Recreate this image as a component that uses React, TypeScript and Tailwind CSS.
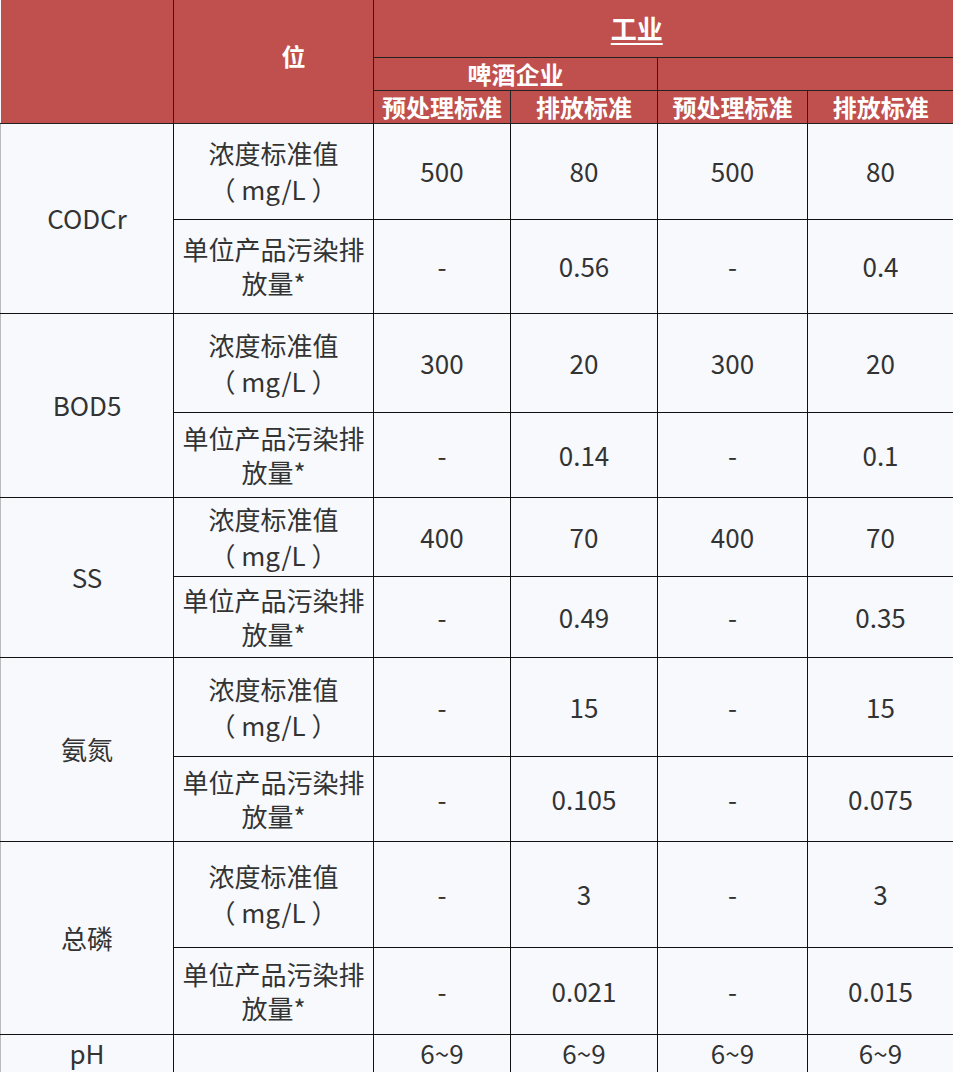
import React from "react";

const groups: { name: string; h: [string, string]; conc: string[]; unit: string[] }[] = [
  { name: "CODCr", h: ["h-[96px]", "h-[94px]"], conc: ["500", "80", "500", "80"], unit: ["-", "0.56", "-", "0.4"] },
  { name: "BOD5", h: ["h-[99px]", "h-[85px]"], conc: ["300", "20", "300", "20"], unit: ["-", "0.14", "-", "0.1"] },
  { name: "SS", h: ["h-[79px]", "h-[81px]"], conc: ["400", "70", "400", "70"], unit: ["-", "0.49", "-", "0.35"] },
  { name: "氨氮", h: ["h-[99px]", "h-[85px]"], conc: ["-", "15", "-", "15"], unit: ["-", "0.105", "-", "0.075"] },
  { name: "总磷", h: ["h-[106px]", "h-[87px]"], conc: ["-", "3", "-", "3"], unit: ["-", "0.021", "-", "0.015"] },
];

const cell = "border-[1.5px] border-[#111] text-center align-middle p-0";
const head = "border-[1.5px] border-[#222] text-center align-middle p-0 text-white font-bold";

export default function App() {
  return (
    <div
      className="w-[953px] h-[1072px] bg-[#f7f9fd] text-[#333] overflow-hidden"
      style={{ fontFamily: '"Noto Sans CJK SC", "Noto Sans", sans-serif' }}
    >
      <table className="w-[953px] table-fixed border-collapse text-[26px] leading-[36px]">
        <colgroup>
          <col className="w-[173px]" />
          <col className="w-[200px]" />
          <col className="w-[137px]" />
          <col className="w-[147px]" />
          <col className="w-[150px]" />
          <col className="w-[146px]" />
        </colgroup>
        <thead className="bg-[#c0504d]">
          <tr className="h-[57px]">
            <th rowSpan={3} className={head + " border-t-0 border-l-0"}></th>
            <th rowSpan={3} className={head + " border-t-0 text-[24px]"}>
              <span className="inline-block pl-[40px] pb-[10px]">位</span>
            </th>
            <th colSpan={4} className={head + " border-t-0 border-r-0 text-[26px]"}>
              <span className="inline-block pr-[54px]">
                <span className="underline underline-offset-4 decoration-2">工业</span>
              </span>
            </th>
          </tr>
          <tr className="h-[33px]">
            <th colSpan={2} className={head + " text-[24px] leading-[28px]"}>啤酒企业</th>
            <th colSpan={2} className={head + " border-r-0 text-[24px] leading-[28px]"}></th>
          </tr>
          <tr className="h-[33px]">
            <th className={head + " text-[24px] leading-[28px]"}>预处理标准</th>
            <th className={head + " text-[24px] leading-[28px]"}>排放标准</th>
            <th className={head + " text-[24px] leading-[28px]"}>预处理标准</th>
            <th className={head + " border-r-0 text-[24px] leading-[28px]"}>排放标准</th>
          </tr>
        </thead>
        <tbody>
          {groups.map((g) => (
            <React.Fragment key={g.name}>
              <tr className={g.h[0]}>
                <td rowSpan={2} className={cell + " border-l-[#bbb]"}>{g.name}</td>
                <td className={cell}>
                  浓度标准值
                  <br />（ mg/L ）
                </td>
                {g.conc.map((v, i) => (
                  <td key={i} className={cell}>{v}</td>
                ))}
              </tr>
              <tr className={g.h[1]}>
                <td className={cell + " leading-[34px]"}>
                  单位产品污染排
                  <br />
                  放量*
                </td>
                {g.unit.map((v, i) => (
                  <td key={i} className={cell}>{v}</td>
                ))}
              </tr>
            </React.Fragment>
          ))}
          <tr className="h-[38px]">
            <td className={cell + " border-l-[#bbb] leading-[30px]"}>pH</td>
            <td className={cell}></td>
            <td className={cell + " leading-[30px]"}>6~9</td>
            <td className={cell + " leading-[30px]"}>6~9</td>
            <td className={cell + " leading-[30px]"}>6~9</td>
            <td className={cell + " leading-[30px]"}>6~9</td>
          </tr>
        </tbody>
      </table>
    </div>
  );
}
